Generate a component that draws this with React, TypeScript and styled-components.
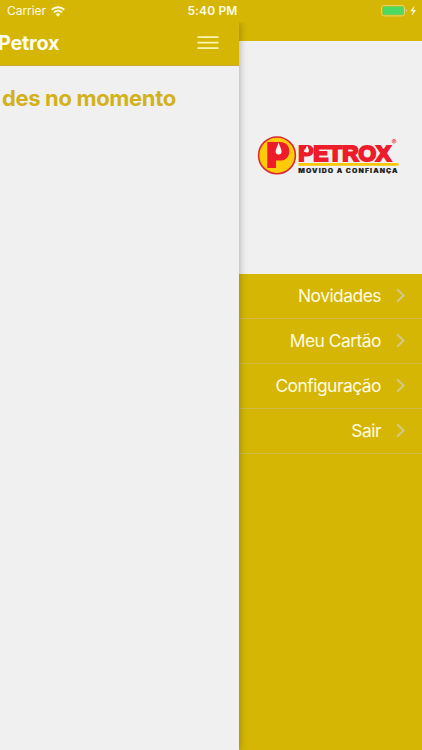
import React from "react";
import styled, { createGlobalStyle } from "styled-components";

const GOLD = "#d5b604";
const PAPER = "#f0f0f0";

const GlobalStyle = createGlobalStyle`
  * { box-sizing: border-box; }
  body {
    margin: 0;
    overflow: hidden;
    background: ${GOLD};
    font-family: Inter, "Liberation Sans", sans-serif;
  }
`;

const Screen = styled.div`
  width: 422px;
  height: 750px;
  display: flex;
  flex-direction: column;
  overflow: hidden;
  background: ${GOLD};
`;

const StatusBar = styled.header`
  height: 22px;
  flex: none;
  display: grid;
  grid-template-columns: 1fr auto 1fr;
  align-items: center;
  padding: 0 5px 0 7px;
  color: #fffbe6;
  font-size: 12px;
  line-height: 22px;
`;

const Carrier = styled.div`
  display: flex;
  align-items: center;
  gap: 5px;
  letter-spacing: -0.05px;
`;

const Clock = styled.time`
  margin-left: 1px;
  font-weight: 600;
  font-size: 12px;
  letter-spacing: 0.15px;
`;

const Power = styled.div`
  display: flex;
  justify-content: flex-end;
  align-items: center;
`;

const Body = styled.div`
  flex: 1;
  display: grid;
  grid-template-columns: 239px 183px;
  min-height: 0;
`;

const Page = styled.main`
  position: relative;
  z-index: 1;
  background: ${PAPER};
  box-shadow: 0 0 8px rgba(0, 0, 0, 0.32);
  clip-path: inset(0 -12px 0 0);
`;

const NavBar = styled.div`
  height: 44px;
  display: flex;
  align-items: center;
  justify-content: space-between;
  padding: 0 20px 2px 0;
  background: ${GOLD};
  border-bottom: 1px solid #c7ab35;
`;

const Title = styled.h1`
  margin: 0 0 0 -2px;
  color: #fffdf0;
  font-size: 19.8px;
  font-weight: 700;
  letter-spacing: -0.2px;
  white-space: nowrap;
`;

const MenuButton = styled.button`
  display: flex;
  padding: 0;
  border: 0;
  background: none;
`;

const Notice = styled.h2`
  margin: 18px 0 0 2px;
  color: #d2b21c;
  font-size: 22px;
  line-height: 28px;
  font-weight: 700;
  letter-spacing: -0.35px;
  white-space: nowrap;
`;

const Drawer = styled.aside`
  display: flex;
  flex-direction: column;
  padding-top: 19px;
`;

const Brand = styled.div`
  height: 233px;
  flex: none;
  display: flex;
  justify-content: center;
  align-items: center;
  padding: 0 5px 5px 0;
  background: ${PAPER};
`;

const MenuItem = styled.a`
  height: 45px;
  display: flex;
  justify-content: flex-end;
  align-items: center;
  gap: 15px;
  padding: 0 17px 1px 0;
  border-bottom: 1px solid #cfba48;
  color: #fffbe0;
  font-size: 17.4px;
  letter-spacing: -0.5px;
`;

const WifiIcon = () => (
  <svg width="14" height="11" viewBox="0 0 14 11" fill="none">
    <path d="M.7 3.8C4.4.3 9.6.3 13.3 3.8" stroke="#fffbe6" strokeWidth="2.1" />
    <path d="M3 6.4c2.3-2.2 5.7-2.2 8 0" stroke="#fffbe6" strokeWidth="2" />
    <path d="M4.7 8.3c1.3-1.3 3.3-1.3 4.6 0L7 10.7Z" fill="#fffbe6" />
  </svg>
);

const BatteryIcon = () => (
  <svg width="36" height="12" viewBox="0 0 36 12">
    <rect x=".5" y=".5" width="23" height="10.4" rx="2.3" fill="none" stroke="#e7d36b" />
    <rect x="1.6" y="1.6" width="20.8" height="8.2" rx="1.1" fill="#4cd964" />
    <path d="M25 4v3.5c1.3-.6 1.3-2.9 0-3.5Z" fill="#e7d36b" />
    <path d="M33.6.8 29.2 6.3h2.7l-1.2 4.4 4.4-5.6h-2.8Z" fill="#fffbe6" />
  </svg>
);

const BurgerIcon = () => (
  <svg width="22" height="14" viewBox="0 0 22 14">
    <path d="M.5 1.2h21M.5 6.7h21M.5 12.2h21" stroke="#fff6ae" strokeWidth="1.8" />
  </svg>
);

const ChevronIcon = () => (
  <svg width="9" height="15" viewBox="0 0 9 15" fill="none">
    <path d="m1.1 1.2 6.4 6.3-6.4 6.3" stroke="#d2c88c" strokeWidth="2.1" />
  </svg>
);

const Wordmark = styled.text`
  font-family: "Liberation Sans", Arial, sans-serif;
  font-weight: 700;
`;

const Tagline = styled.text`
  font-family: Inter, sans-serif;
  font-weight: 900;
  letter-spacing: 0.9px;
`;

const PetroxLogo = () => (
  <svg width="142" height="42" viewBox="0 0 142 42" role="img" aria-label="Petrox">
    <circle cx="20" cy="21.4" r="18.4" fill="#ffcb08" stroke="#d92b32" strokeWidth="1.6" />
    <path
      d="M10.3 8H23c6 0 9.3 3.8 9.3 9.2S29 26.6 23 26.6h-4v7.4h-8.7Z"
      fill="#ed1c2b"
    />
    <path d="M21.6 8.6c-1 4-3 6.6-3 9a3 3 0 0 0 6 0c0-2.4-2-5-3-9Z" fill="#fff9ed" />
    <Wordmark
      x="41.2" y="26.7" fontSize="22.8" textLength="93" lengthAdjust="spacingAndGlyphs"
      fill="#ed1c2b" stroke="#ed1c2b" strokeWidth="2.1"
    >
      PETROX
    </Wordmark>
    <path d="M50 11.6c-.9 2.3-1.9 3.6-1.9 5.1a1.9 1.9 0 0 0 3.8 0c0-1.5-1-2.8-1.9-5.1Z" fill="#fff9ed" />
    <circle cx="137" cy="7.2" r="1.9" fill="none" stroke="#ed5660" strokeWidth=".8" />
    <path d="M136.5 8.3V6.3h.7a.5.5 0 0 1 0 1h-.7m.7 0 .5 1" fill="none" stroke="#ed1c2b" strokeWidth=".5" />
    <rect x="41.5" y="29" width="100" height="2.8" fill="#fdc70c" />
    <Tagline
      x="41.3" y="39.3" fontSize="5.7" textLength="100.4" lengthAdjust="spacingAndGlyphs"
      fill="#222" stroke="#222" strokeWidth=".15"
    >
      MOVIDO A CONFIANÇA
    </Tagline>
  </svg>
);

const ITEMS = ["Novidades", "Meu Cartão", "Configuração", "Sair"];

export default function App() {
  return (
    <>
      <GlobalStyle />
      <Screen>
        <StatusBar>
          <Carrier>
            Carrier
            <WifiIcon />
          </Carrier>
          <Clock>5:40 PM</Clock>
          <Power>
            <BatteryIcon />
          </Power>
        </StatusBar>
        <Body>
          <Page>
            <NavBar>
              <Title>Petrox</Title>
              <MenuButton aria-label="Menu">
                <BurgerIcon />
              </MenuButton>
            </NavBar>
            <Notice>des no momento</Notice>
          </Page>
          <Drawer>
            <Brand>
              <PetroxLogo />
            </Brand>
            <nav>
              {ITEMS.map((label) => (
                <MenuItem key={label}>
                  {label}
                  <ChevronIcon />
                </MenuItem>
              ))}
            </nav>
          </Drawer>
        </Body>
      </Screen>
    </>
  );
}
